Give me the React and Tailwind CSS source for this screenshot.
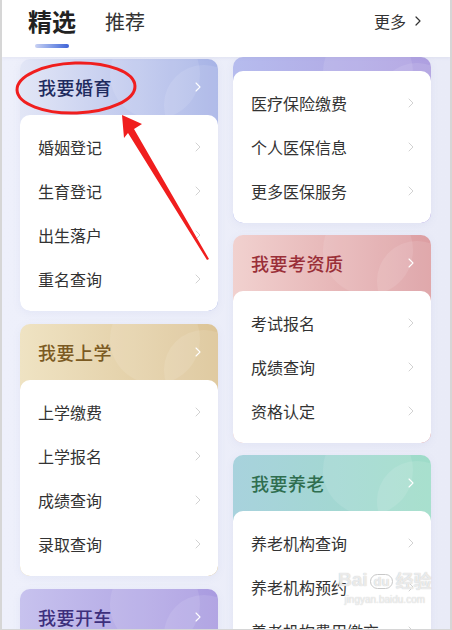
import { ChevronRight } from 'lucide-react'

const font = { fontFamily: '"Noto Sans CJK SC", "Noto Sans", sans-serif' }

function Card({ title, items, bg, titleColor, headerClass = 'h-[56px]' }) {
  return (
    <div className={`relative overflow-hidden rounded-[10px] shadow-[0_2px_8px_rgba(120,130,190,0.08)] ${bg}`}>
      <div className="absolute -right-[26px] top-[6px] h-[80px] w-[80px] rounded-full bg-white/10" />
      <div className="absolute right-[18px] -top-[30px] h-[90px] w-[90px] rounded-full bg-white/10" />
      <div className={`relative flex items-center justify-between pl-[18px] pr-[12px] ${headerClass}`}>
        {title && (
          <>
            <span className={`text-[18px] font-medium tracking-[0.5px] ${titleColor}`}>{title}</span>
            <ChevronRight size={16} strokeWidth={1.6} className="text-white" />
          </>
        )}
      </div>
      <div className="relative rounded-[10px] bg-white py-[10px]">
        {items.map((t) => (
          <div key={t} className="flex h-[44px] items-center justify-between pl-[18px] pr-[12px]">
            <span className="text-[16px] text-[#333]">{t}</span>
            <ChevronRight size={16} strokeWidth={1.2} className="text-[#c6c6c6]" />
          </div>
        ))}
      </div>
    </div>
  )
}

export default function App() {
  return (
    <div
      style={font}
      className="relative h-[630px] w-[452px] overflow-hidden border-x-2 border-b border-[#d6d6d6] bg-[#eef0fa]"
    >
      <div className="relative z-10 flex h-[57px] items-start justify-between bg-white pl-[26px] pr-[24px] shadow-[0_1px_3px_rgba(150,150,190,0.12)]">
        <div className="flex items-start gap-[29px] pt-[5px]">
          <div className="flex flex-col items-center">
            <span className="text-[24px] font-bold leading-[32px] text-[#222]">精选</span>
            <div className="mt-[7px] h-[4px] w-[34px] rounded-full bg-gradient-to-r from-[#c9d1f2] to-[#3f62d6]" />
          </div>
          <span className="pt-[1px] text-[20px] leading-[32px] text-[#333]">推荐</span>
        </div>
        <div className="flex items-center gap-[4px] pt-[9px] text-[16px] text-[#333]">
          <span>更多</span>
          <ChevronRight size={16} strokeWidth={1.8} />
        </div>
      </div>

      <div className="flex gap-[15px] bg-gradient-to-r from-[#eef0fb] to-[#e9ebf7] pl-[18px]">
        <div className="flex w-[198px] flex-col gap-[13px] pt-[2px]">
          <Card
            title="我要婚育"
            titleColor="text-[#1f2b5e]"
            bg="bg-gradient-to-r from-[#e2e6f6] to-[#a7b3e6]"
            items={['婚姻登记', '生育登记', '出生落户', '重名查询']}
          />
          <Card
            title="我要上学"
            titleColor="text-[#7b5a22]"
            bg="bg-gradient-to-r from-[#efe3c3] to-[#dcc497]"
            items={['上学缴费', '上学报名', '成绩查询', '录取查询']}
          />
          <Card
            title="我要开车"
            titleColor="text-[#3d2f7c]"
            bg="bg-gradient-to-r from-[#c7c2ee] to-[#a99be0]"
            items={['驾照考试', '驾照换证']}
          />
        </div>
        <div className="flex w-[198px] flex-col gap-[12px]">
          <Card
            headerClass="h-[14px]"
            bg="bg-gradient-to-r from-[#b6bcee] to-[#ae9fe0]"
            items={['医疗保险缴费', '个人医保信息', '更多医保服务']}
          />
          <Card
            title="我要考资质"
            titleColor="text-[#9a2f38]"
            bg="bg-gradient-to-r from-[#f1d1cf] to-[#dc9ea2]"
            items={['考试报名', '成绩查询', '资格认定']}
          />
          <Card
            title="我要养老"
            titleColor="text-[#2f6e4f]"
            bg="bg-gradient-to-r from-[#a8d2dd] to-[#9edcc8]"
            items={['养老机构查询', '养老机构预约', '养老机构费用缴交']}
          />
        </div>
      </div>

      {/* watermark */}
      <div className="pointer-events-none absolute left-[336px] top-[570px] z-20 flex flex-col items-center leading-none text-white/70 [text-shadow:0_0_1px_#b8b8b8]">
        <div className="flex items-end gap-[2px]">
          <span className="text-[19px] font-bold" style={{ fontFamily: '"Liberation Sans", sans-serif' }}>Bai</span>
          <span className="rounded-full border border-[#c8c8c8] px-[3px] text-[13px] font-bold" style={{ fontFamily: '"Liberation Sans", sans-serif' }}>du</span>
          <span className="text-[18px] font-bold">经验</span>
        </div>
        <span className="mt-[6px] text-[10px]" style={{ fontFamily: '"Liberation Sans", sans-serif' }}>jingyan.baidu.com</span>
      </div>

      {/* annotation */}
      <svg className="pointer-events-none absolute left-0 top-0 z-30" width="452" height="630" viewBox="0 0 452 630">
        <ellipse cx="74" cy="88" rx="59" ry="25" fill="none" stroke="#f01e1e" strokeWidth="3" transform="rotate(-2 74 88)" />
        <polygon points="120,115 140,124 132,129 207,259 205,260 126,133 122,138" fill="#f01e1e" />
      </svg>
    </div>
  )
}
